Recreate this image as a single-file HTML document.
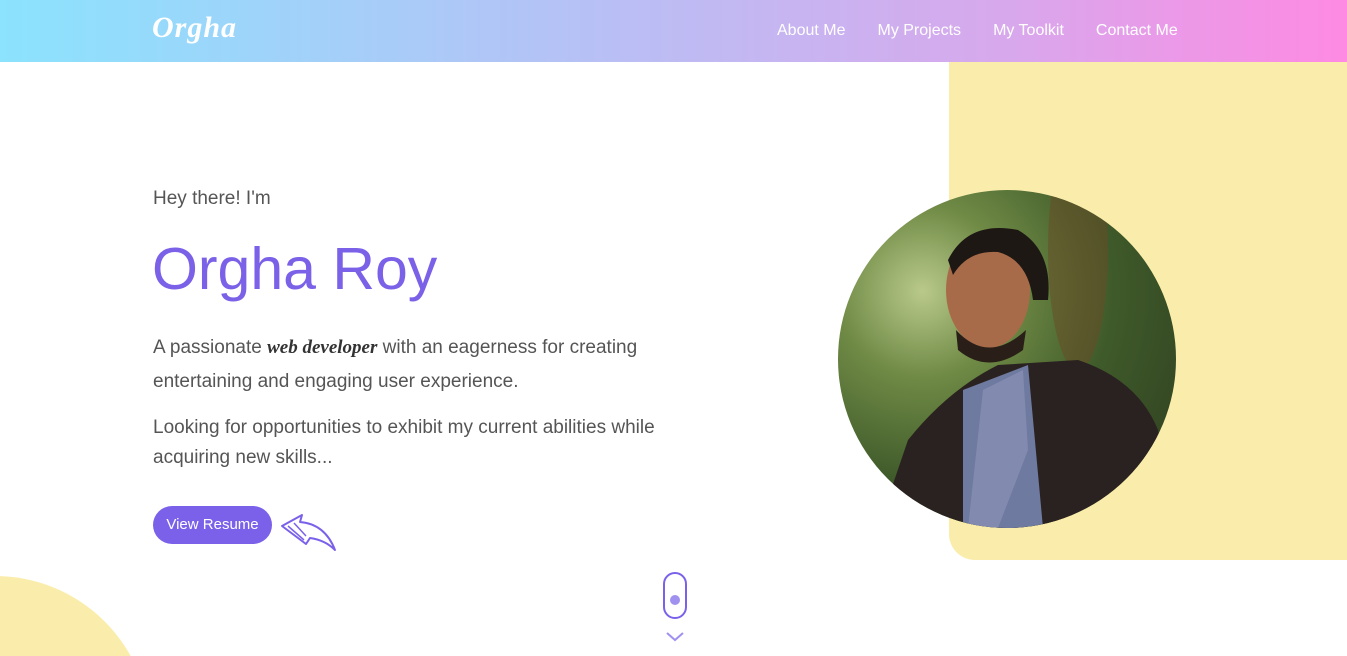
<!DOCTYPE html>
<html><head><meta charset="utf-8"><style>
*{margin:0;padding:0;box-sizing:border-box}
html,body{width:1347px;height:656px;overflow:hidden}
body{background:#fff;font-family:"Liberation Sans",sans-serif;position:relative}
.nav{position:absolute;left:0;top:0;width:1347px;height:62px;background:linear-gradient(90deg,#8be3fd 0%,#b3c3f6 40%,#d8a8ec 75%,#fe8ae3 100%);z-index:2}
.logo{position:absolute;left:152px;top:11px;color:#fff;font-family:"Liberation Serif",serif;font-style:italic;font-size:30px;font-weight:bold;letter-spacing:1px}
.links{position:absolute;top:22px;left:777px;color:#fff;font-size:16px;white-space:nowrap}
.links span{margin-right:32px}
.yel{position:absolute;left:949px;top:62px;width:398px;height:498px;background:#faedab;border-bottom-left-radius:26px}
.bw{position:absolute;left:0;top:560px;width:200px;height:96px;overflow:hidden}
.blob{position:absolute;left:-160px;top:16px;width:310px;height:310px;border-radius:50%;background:#faedab}
.photo{position:absolute;left:838px;top:190px;width:338px;height:338px;border-radius:50%;overflow:hidden;
background:radial-gradient(circle at 25% 30%,#b9c98a 0,#6f8a45 25%,#3f5a2a 55%,#2c3a1e 100%)}
.hey{position:absolute;left:153px;top:188px;font-size:19px;color:#555}
h1{position:absolute;left:152px;top:235px;font-size:59px;font-weight:normal;color:#7b61e8}
.p{position:absolute;left:153px;font-size:19px;color:#555;line-height:34px;width:540px}
.btn{position:absolute;left:153px;top:506px;width:119px;height:38px;border-radius:19px;background:#7b61ea;color:#fff;font-size:15px;text-align:center;line-height:38px}
</style></head><body>
<div class="nav"><div class="logo">Orgha</div>
<div class="links"><span>About Me</span><span>My Projects</span><span>My Toolkit</span><span>Contact Me</span></div></div>
<div class="yel"></div>
<div class="bw"><div class="blob"></div></div>
<div class="photo">
<svg width="338" height="338" viewBox="0 0 338 338">
<ellipse cx="240" cy="60" rx="30" ry="120" fill="#6a4a25" opacity=".5"/>
<path d="M40 338 L70 250 Q110 200 160 175 L240 170 Q300 190 320 240 L338 338Z" fill="#2a2220"/>
<path d="M125 200 L190 175 L205 338 L125 338Z" fill="#6f7aa0"/>
<path d="M145 200 L185 180 L190 260 L160 338 L130 338Z" fill="#8a92b5" opacity=".7"/>
<ellipse cx="150" cy="100" rx="42" ry="58" fill="#a86b4a"/>
<path d="M110 70 Q130 30 180 40 Q215 60 210 110 L195 110 Q190 70 160 62 Q130 60 115 85Z" fill="#1e1814"/>
<path d="M118 140 Q150 175 188 140 L185 160 Q150 185 120 160Z" fill="#2a1e18"/>
</svg></div>
<div class="hey">Hey there! I'm</div>
<h1>Orgha Roy</h1>
<div class="p" style="top:331px">A passionate <i style="font-family:'Liberation Serif',serif;font-weight:bold;color:#333">web developer</i> with an eagerness for creating entertaining and engaging user experience.</div>
<div class="p" style="top:413px;line-height:30px">Looking for opportunities to exhibit my current abilities while acquiring new skills...</div>
<div class="btn">View Resume</div>
<svg style="position:absolute;left:280px;top:512px" width="58" height="42" viewBox="0 0 58 42">
<path d="M2 14 L22 3 L20 10 Q45 12 55 38 Q45 28 30 26 L26 32 Z" fill="#fff" stroke="#7b61ea" stroke-width="2" stroke-linejoin="round"/>
<path d="M8 14 L24 28 M14 11 L26 24" stroke="#7b61ea" stroke-width="1.5"/>
</svg>
<svg style="position:absolute;left:660px;top:570px" width="30" height="78" viewBox="0 0 30 78">
<rect x="4" y="3" width="22" height="45" rx="11" fill="none" stroke="#7b61ea" stroke-width="2"/>
<circle cx="15" cy="30" r="5" fill="#a090f0"/>
<path d="M7 63 L15 70 L23 63" fill="none" stroke="#a090f0" stroke-width="2"/>
</svg>
</body></html>
